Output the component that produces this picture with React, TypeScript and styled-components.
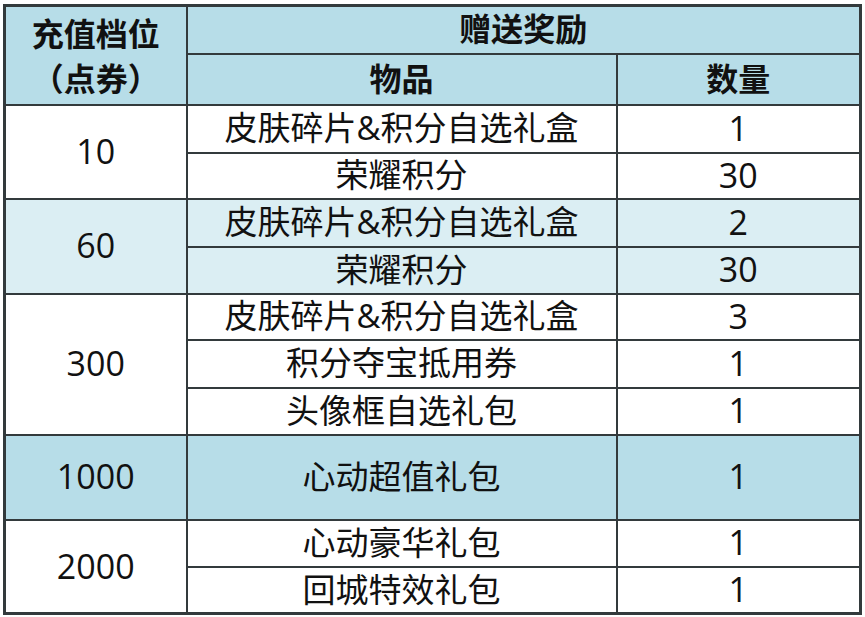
import React from 'react';
import styled, { createGlobalStyle } from 'styled-components';

const GlobalStyle = createGlobalStyle`
  html, body {
    margin: 0;
    padding: 0;
    background: #ffffff;
  }
`;

const HEADER_BG = '#b7dde8';
const LIGHT_BG = '#dbeef3';
const LINE = '#333a3c';

const Page = styled.div`
  padding: 4px 0 0 3px;
`;

const Table = styled.table`
  border-collapse: collapse;
  table-layout: fixed;
  width: 858px;
  border: 3px solid ${LINE};
  font-family: 'Open Sans', 'Noto Sans CJK SC', sans-serif;
  color: #111111;
`;

const HeadCell = styled.th<{ tall?: boolean }>`
  background: ${HEADER_BG};
  border: 2px solid ${LINE};
  padding: ${(props) => (props.tall ? '2px 0 0' : '0')};
  font-size: 32px;
  font-weight: 700;
  line-height: ${(props) => (props.tall ? 1.42 : 1.15)};
  text-align: center;
  vertical-align: middle;
`;

const Cell = styled.td<{ bg: string; numeric?: boolean }>`
  background: ${(props) => props.bg};
  border: 2px solid ${LINE};
  padding: 0;
  font-size: ${(props) => (props.numeric ? '34px' : '33px')};
  font-weight: 400;
  line-height: 1.1;
  text-align: center;
  vertical-align: middle;
  white-space: nowrap;
`;

const Row = styled.tr<{ h: number }>`
  height: ${(props) => props.h}px;
`;

type Group = {
  tier: string;
  bg: string;
  items: { name: string; qty: string; h: number }[];
};

const groups: Group[] = [
  {
    tier: '10',
    bg: '#ffffff',
    items: [
      { name: '皮肤碎片&积分自选礼盒', qty: '1', h: 48 },
      { name: '荣耀积分', qty: '30', h: 46 },
    ],
  },
  {
    tier: '60',
    bg: LIGHT_BG,
    items: [
      { name: '皮肤碎片&积分自选礼盒', qty: '2', h: 48 },
      { name: '荣耀积分', qty: '30', h: 47 },
    ],
  },
  {
    tier: '300',
    bg: '#ffffff',
    items: [
      { name: '皮肤碎片&积分自选礼盒', qty: '3', h: 46 },
      { name: '积分夺宝抵用券', qty: '1', h: 48 },
      { name: '头像框自选礼包', qty: '1', h: 47 },
    ],
  },
  {
    tier: '1000',
    bg: HEADER_BG,
    items: [{ name: '心动超值礼包', qty: '1', h: 85 }],
  },
  {
    tier: '2000',
    bg: '#ffffff',
    items: [
      { name: '心动豪华礼包', qty: '1', h: 47 },
      { name: '回城特效礼包', qty: '1', h: 47 },
    ],
  },
];

function App(): React.ReactElement {
  return (
    <>
      <GlobalStyle />
      <Page>
        <Table>
          <colgroup>
            <col style={{ width: 182 }} />
            <col style={{ width: 430 }} />
            <col style={{ width: 244 }} />
          </colgroup>
          <thead>
            <Row h={48}>
              <HeadCell tall rowSpan={2}>
                充值档位
                <br />
                （点券）
              </HeadCell>
              <HeadCell colSpan={2}>赠送奖励</HeadCell>
            </Row>
            <Row h={51}>
              <HeadCell>物品</HeadCell>
              <HeadCell>数量</HeadCell>
            </Row>
          </thead>
          <tbody>
            {groups.map((g) =>
              g.items.map((item, i) => (
                <Row key={`${g.tier}-${i}`} h={item.h}>
                  {i === 0 && (
                    <Cell bg={g.bg} numeric rowSpan={g.items.length}>
                      {g.tier}
                    </Cell>
                  )}
                  <Cell bg={g.bg}>{item.name}</Cell>
                  <Cell bg={g.bg} numeric>
                    {item.qty}
                  </Cell>
                </Row>
              )),
            )}
          </tbody>
        </Table>
      </Page>
    </>
  );
}

export default App;
